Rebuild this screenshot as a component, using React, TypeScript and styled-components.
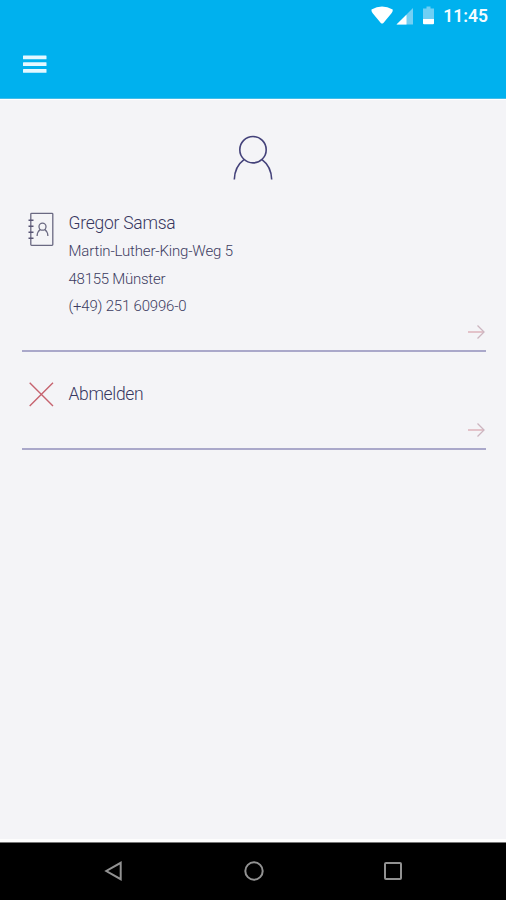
import React from "react";
import styled, { createGlobalStyle } from "styled-components";

const GlobalStyle = createGlobalStyle`
  * { box-sizing: border-box; }
  body { margin: 0; font-family: Roboto, sans-serif; background: #f4f4f7; }
  svg { display: block; flex: none; }
`;

const Screen = styled.div`
  display: flex;
  flex-direction: column;
  width: 506px;
  height: 900px;
  background: #f4f4f7;
  overflow: hidden;
`;

const Header = styled.header`
  height: 99px;
  flex: none;
  background: #00b1ee;
  border-bottom: 1px solid #43bde9;
`;

const StatusBar = styled.div`
  display: flex;
  align-items: center;
  justify-content: flex-end;
  height: 32px;
  padding-right: 18px;
`;

const Clock = styled.time`
  margin-left: 3px;
  color: #f4fcff;
  font-size: 17.5px;
  font-weight: 600;
  line-height: 32px;
  letter-spacing: 0;
`;

const MenuButton = styled.button`
  display: block;
  margin: 23px 0 0 23px;
  padding: 0;
  border: 0;
  background: none;
`;

const Content = styled.main`
  flex: 1;
  border-top: 1px solid #fff;
  border-bottom: 3px solid #fdfdfd;
  padding: 35px 20px 0 22px;
`;

const Avatar = styled.div`
  display: flex;
  justify-content: center;
  height: 46px;
  padding-right: 2px;
`;

const Entry = styled.section<{ $height: number; $top: number }>`
  display: grid;
  grid-template-columns: 46.5px 1fr 18.5px;
  height: ${(p) => p.$height}px;
  padding-top: ${(p) => p.$top}px;
  border-bottom: 2px solid #aaa8ca;
`;

const IconCell = styled.div<{ $top: number }>`
  padding: ${(p) => p.$top}px 0 0 6px;
`;

const Title = styled.h2<{ $spacing: number }>`
  margin: 0;
  color: #38375f;
  font-size: 17.5px;
  font-weight: 350;
  line-height: 30px;
  letter-spacing: ${(p) => p.$spacing}px;
`;

const Line = styled.p<{ $spacing: number }>`
  margin: 0;
  color: #3d3c62;
  font-size: 15px;
  font-weight: 350;
  line-height: 27.5px;
  letter-spacing: ${(p) => p.$spacing}px;
`;

const ArrowCell = styled.div`
  align-self: end;
  padding-bottom: 9px;
`;

const NavBar = styled.nav`
  display: flex;
  align-items: center;
  justify-content: space-between;
  height: 58px;
  flex: none;
  padding: 0 102px 1px 103px;
  background: #000;
  border-top: 1px solid #777;
`;

const WifiIcon = () => (
  <svg width="25" height="20" viewBox="0 0 25 20">
    <path d="M0.500 3.500Q11-2.500 21.700 3.500Q22 5.500 20.500 7.200L12.400 16.900Q11.100 18.300 9.800 16.900L1.700 7.200Q0.200 5.500 0.500 3.500Z" fill="#fff" />
  </svg>
);

const SignalIcon = () => (
  <svg width="24" height="20" viewBox="0 0 24 20">
    <path d="M17 2V18.500H0.500Z" fill="#74d0f4" />
    <path d="M10.500 8.700V18.500H0.500Z" fill="#fff" />
  </svg>
);

const BatteryIcon = () => (
  <svg width="20" height="20" viewBox="0 0 20 20">
    <path d="M6.500 0.500h4v2H14V14H3V2.500h3.500Z" fill="#6fcff4" />
    <path d="M3 13h11v4.200q0 1-1 1H4q-1 0-1-1Z" fill="#fff" />
  </svg>
);

const PersonIcon = () => (
  <svg width="42" height="46" viewBox="0 0 42 46" fill="none" stroke="#44427a" strokeWidth="1.6">
    <circle cx="21" cy="14.700" r="13.200" />
    <path d="M12 24.600C6 29 2.600 35.500 2.300 44.500M30 24.600C36 29 39.400 35.500 39.700 44.500" />
  </svg>
);

const ContactBookIcon = () => (
  <svg width="28" height="35" viewBox="0 0 28 35" fill="none" stroke="#6a6982" strokeWidth="1.3">
    <rect x="2.800" y="1.300" width="22" height="32" rx="0.800" />
    <path d="M0.500 8.200h5M0.500 14.200h5M0.500 20.200h5M0.500 26.200h5" stroke="#585575" strokeWidth="1.500" />
    <circle cx="14.500" cy="14.700" r="3.500" />
    <path d="M12.200 17.500Q9.300 19.700 9.100 24M16.800 17.500Q19.700 19.700 19.900 24" />
  </svg>
);

const CrossIcon = () => (
  <svg width="27" height="27" viewBox="0 0 27 27" stroke="#c6636f" strokeWidth="1.400">
    <path d="M1.700 1.800L25 25.100M25 1.800L1.700 25.100" />
  </svg>
);

const ArrowIcon = () => (
  <svg width="18" height="18" viewBox="0 0 18 18" fill="none" strokeWidth="1.300">
    <path d="M0 9H16" stroke="#daa9b2" />
    <path d="M9.500 2.500L16 9L9.500 15.500" stroke="#ccb5c0" />
  </svg>
);

export default function App() {
  return (
    <>
      <GlobalStyle />
      <Screen>
        <Header>
          <StatusBar>
            <WifiIcon />
            <SignalIcon />
            <BatteryIcon />
            <Clock>11:45</Clock>
          </StatusBar>
          <MenuButton aria-label="Menü">
            <svg width="24" height="19" viewBox="0 0 24 19" fill="#e4f8ff">
              <rect y="0.500" width="23.500" height="3.700" rx="0.500" />
              <rect y="7.200" width="23.500" height="3.700" rx="0.500" />
              <rect y="14" width="23.500" height="3.700" rx="0.500" />
            </svg>
          </MenuButton>
        </Header>
        <Content>
          <Avatar><PersonIcon /></Avatar>
          <Entry $height={171} $top={27}>
            <IconCell $top={4}><ContactBookIcon /></IconCell>
            <div>
              <Title $spacing={-0.25}>Gregor Samsa</Title>
              <Line $spacing={-0.16}>Martin-Luther-King-Weg 5</Line>
              <Line $spacing={-0.25}>48155 Münster</Line>
              <Line $spacing={-0.2}>(+49) 251 60996-0</Line>
            </div>
            <ArrowCell><ArrowIcon /></ArrowCell>
          </Entry>
          <Entry $height={98} $top={27}>
            <IconCell $top={2}><CrossIcon /></IconCell>
            <Title $spacing={-0.35}>Abmelden</Title>
            <ArrowCell><ArrowIcon /></ArrowCell>
          </Entry>
        </Content>
        <NavBar>
          <svg width="22" height="22" viewBox="0 0 22 22" fill="none" stroke="#929292" strokeWidth="2">
            <path d="M17.700 2.800V19.200L3.300 11Z" />
          </svg>
          <svg width="22" height="22" viewBox="0 0 22 22" fill="none" stroke="#929292" strokeWidth="2">
            <circle cx="11" cy="11" r="8.700" />
          </svg>
          <svg width="22" height="22" viewBox="0 0 22 22" fill="none" stroke="#929292" strokeWidth="2">
            <rect x="3" y="3" width="16" height="16" rx="1" />
          </svg>
        </NavBar>
      </Screen>
    </>
  );
}
